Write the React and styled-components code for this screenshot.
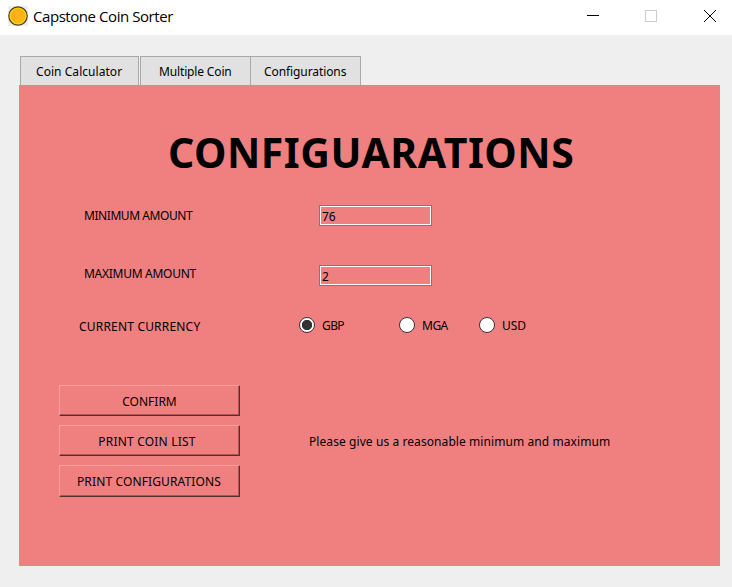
import React from "react";
import styled, { createGlobalStyle } from "styled-components";

const GlobalStyle = createGlobalStyle`
  * { box-sizing: border-box; }
  body { margin: 0; background: #efefef; overflow: hidden; }
`;

const Window = styled.div`
  width: 732px;
  height: 587px;
  background: #efefef;
  color: #000;
  font: 12px/16px "Noto Sans", sans-serif;
`;

const TitleBar = styled.header`
  display: flex;
  align-items: center;
  height: 35px;
  padding: 0 15px 3px 8px;
  background: #fff;
`;

const Title = styled.h1`
  flex: 1;
  margin: 0 0 0 5px;
  font: 400 15px/20px "Open Sans", "Noto Sans", sans-serif;
  letter-spacing: ${(p) => p.$track}px;
`;

const WindowControls = styled.div`
  display: flex;
  gap: 46px;
  svg { display: block; }
`;

const Text = styled.span`
  white-space: nowrap;
  letter-spacing: ${(p) => p.$track || 0}px;
`;

const TabList = styled.nav`
  display: flex;
  height: 50px;
  padding: 21px 0 0 20px;
`;

const Tab = styled.button`
  width: ${(p) => p.$width}px;
  height: 29px;
  margin-right: ${(p) => p.$gap || 0}px;
  padding: 1px 0 0 ${(p) => p.$inset}px;
  border: 1px solid #a9a9a9;
  border-bottom: 0;
  ${(p) => p.$joined && "border-left: 0;"}
  background: #e1e1e1;
  color: inherit;
  font: inherit;
  text-align: left;
`;

const Panel = styled.main`
  width: 701px;
  height: 481px;
  margin-left: 19px;
  padding-top: 42px;
  background: #f08080;
`;

const Heading = styled.h2`
  height: 51px;
  margin: 0 0 0 149px;
  font: 700 41px/50px "Noto Sans", sans-serif;
  letter-spacing: ${(p) => p.$track}px;
  white-space: nowrap;
`;

const Field = styled.label`
  display: grid;
  grid-template-columns: 235px 113px;
  height: 21px;
  margin: ${(p) => p.$top}px 0 0 65px;
`;

const FieldLabel = styled(Text)`
  margin-top: ${(p) => p.$drop}px;
`;

const AmountInput = styled.input`
  width: 113px;
  height: 21px;
  padding: 2px 0 0 2px;
  border: 1px solid #7a7a7a;
  outline: 1px solid #fff;
  outline-offset: -2px;
  border-radius: 0;
  background: transparent;
  color: inherit;
  font: inherit;
`;

const CurrencyRow = styled.div`
  display: grid;
  grid-template-columns: 220px 100px 80px 80px;
  height: 18px;
  margin: 31px 0 0 60px;
`;

const CurrencyLabel = styled(Text)`
  margin-top: 2px;
`;

const Choice = styled.label`
  display: flex;
  height: 16px;
  gap: 7px;
`;

const Radio = styled.input`
  appearance: none;
  width: 16px;
  height: 16px;
  margin: 0;
  border: 1px solid #333;
  border-radius: 50%;
  background: #fff;
  &:checked { background: radial-gradient(circle, #333 4.8px, #fff 5.5px); }
`;

const ChoiceText = styled(Text)`
  margin-top: 1px;
`;

const Footer = styled.section`
  display: flex;
  margin: 50px 0 0 40px;
`;

const ButtonStack = styled.div`
  display: flex;
  flex-direction: column;
  gap: 9px;
`;

const PushButton = styled.button`
  width: 181px;
  height: ${(p) => p.$height}px;
  padding: 2px ${(p) => p.$trail}px 0 0;
  border: 1px solid;
  border-color: #ffa0a0 #503030 #503030 #ffa0a0;
  box-shadow: inset -1px -1px #a85858;
  background: #f08080;
  color: inherit;
  font: inherit;
`;

const Message = styled(Text)`
  margin: 49px 0 0 69px;
`;

const CoinIcon = () => (
  <svg width="20" height="20" viewBox="0 0 20 20">
    <defs>
      <linearGradient id="coin" x1="0" y1="0" x2="1" y2="1">
        <stop stopColor="#ffb01a" />
        <stop offset=".55" stopColor="#ffae18" />
        <stop offset="1" stopColor="#ffc414" />
      </linearGradient>
    </defs>
    <rect width="20" height="20" fill="#ededed" />
    <circle cx="10" cy="10" r="9.2" fill="#ffd60a" stroke="#4b4030" strokeWidth="1.2" />
    <circle cx="10" cy="10" r="6.8" fill="url(#coin)" stroke="#fba60c" strokeWidth=".7" />
    <path d="M12.5 7C10 5.5 7.5 7 8 9s4.5 1 4.2 3-3 2.3-4.7 1" fill="none" stroke="#ffbd1c" strokeWidth="1" />
  </svg>
);

const tabs = [
  { name: "Coin Calculator", width: 119, gap: 1, inset: 15, track: 0.05 },
  { name: "Multiple Coin", width: 111, inset: 18, track: -0.15 },
  { name: "Configurations", width: 110, inset: 13, joined: true, track: -0.09 },
];

const fields = [
  { name: "MINIMUM AMOUNT", value: "76", top: 27, drop: 3, track: -0.43 },
  { name: "MAXIMUM AMOUNT", value: "2", top: 39, drop: 1, track: -0.28 },
];

const currencies = [
  { name: "GBP", track: -0.6 },
  { name: "MGA", track: -0.5 },
  { name: "USD", track: 0 },
];

const actions = [
  { name: "CONFIRM", height: 31, trail: 0, track: 0 },
  { name: "PRINT COIN LIST", height: 31, trail: 5, track: 0.2 },
  { name: "PRINT CONFIGURATIONS", height: 32, trail: 1, track: 0.13 },
];

export default function App() {
  return (
    <Window>
      <GlobalStyle />
      <TitleBar>
        <CoinIcon />
        <Title $track={-0.44}>Capstone Coin Sorter</Title>
        <WindowControls>
          <svg width="12" height="12" shapeRendering="crispEdges"><path d="M0 5.5h12" stroke="#000" /></svg>
          <svg width="12" height="12" shapeRendering="crispEdges"><path d="M.5.5h11v11H.5z" fill="none" stroke="#ccc" /></svg>
          <svg width="14" height="12"><path d="M1 0l12 12M13 0L1 12" stroke="#000" /></svg>
        </WindowControls>
      </TitleBar>
      <TabList>
        {tabs.map((t) => (
          <Tab key={t.name} $width={t.width} $gap={t.gap} $inset={t.inset} $joined={t.joined}>
            <Text $track={t.track}>{t.name}</Text>
          </Tab>
        ))}
      </TabList>
      <Panel>
        <Heading $track={0.5}>CONFIGUARATIONS</Heading>
        {fields.map((f) => (
          <Field key={f.name} $top={f.top}>
            <FieldLabel $drop={f.drop} $track={f.track}>{f.name}</FieldLabel>
            <AmountInput defaultValue={f.value} />
          </Field>
        ))}
        <CurrencyRow>
          <CurrencyLabel $track={0.19}>CURRENT CURRENCY</CurrencyLabel>
          {currencies.map((c, i) => (
            <Choice key={c.name}>
              <Radio type="radio" name="currency" defaultChecked={i === 0} />
              <ChoiceText $track={c.track}>{c.name}</ChoiceText>
            </Choice>
          ))}
        </CurrencyRow>
        <Footer>
          <ButtonStack>
            {actions.map((a) => (
              <PushButton key={a.name} $height={a.height} $trail={a.trail}>
                <Text $track={a.track}>{a.name}</Text>
              </PushButton>
            ))}
          </ButtonStack>
          <Message $track={0.08}>Please give us a reasonable minimum and maximum</Message>
        </Footer>
      </Panel>
    </Window>
  );
}
